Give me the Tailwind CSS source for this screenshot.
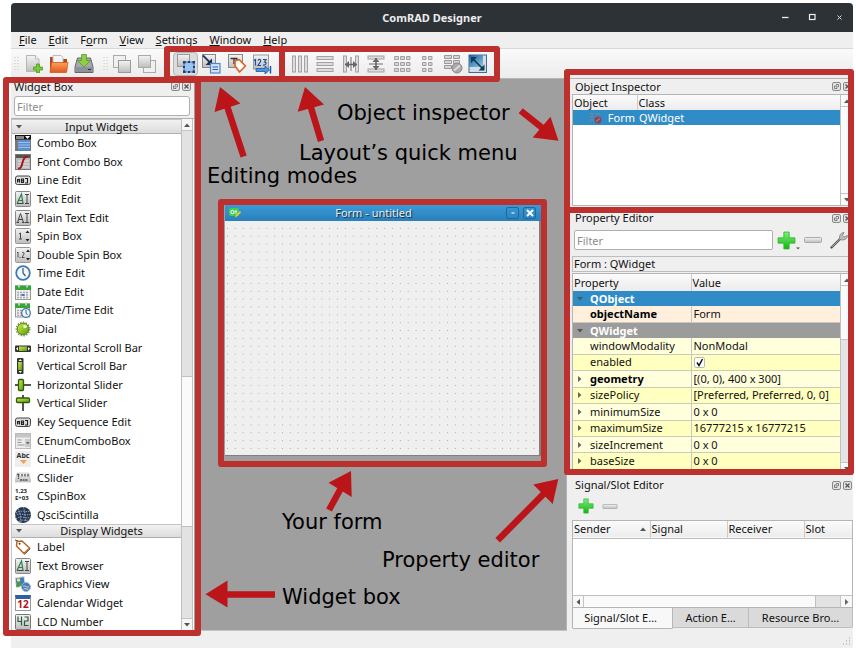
<!DOCTYPE html>
<html lang="en">
<head>
<meta charset="utf-8">
<title>ComRAD Designer</title>
<script src="https://cdn.jsdelivr.net/npm/@tailwindcss/browser@4"></script>
</head>
<body class="min-h-screen flex flex-col bg-white pt-[3px] pr-[3px] pb-1 pl-[11px] font-['Noto_Sans',sans-serif] text-[11px] leading-4 text-[#111]">

<!-- Shared icon symbols -->
<svg class="absolute size-0" aria-hidden="true">
  <defs>
    <linearGradient id="gGrey" x1="0" y1="0" x2="0" y2="1"><stop offset="0" stop-color="#f4f4f4"/><stop offset="1" stop-color="#bdbdbd"/></linearGradient>
    <linearGradient id="gGreen" x1="0" y1="0" x2="0" y2="1"><stop offset="0" stop-color="#7df07a"/><stop offset="1" stop-color="#12b312"/></linearGradient>
    <linearGradient id="gLime" x1="0" y1="0" x2="1" y2="1"><stop offset="0" stop-color="#c8f04a"/><stop offset="1" stop-color="#5a9a10"/></linearGradient>
    <linearGradient id="gOrange" x1="0" y1="0" x2="0" y2="1"><stop offset="0" stop-color="#f9a45c"/><stop offset="1" stop-color="#e0561d"/></linearGradient>
    <linearGradient id="gBlue" x1="0" y1="0" x2="1" y2="1"><stop offset="0" stop-color="#1d5f9e"/><stop offset="1" stop-color="#8cc4ea"/></linearGradient>
  </defs>
  <symbol id="float" viewBox="0 0 9 9"><rect x=".5" y=".5" width="8" height="8" rx="1.500" fill="#e4e4e4" stroke="#888"/><path d="M4 2.500h2.500v2.500M2.500 4h2.500v2.500h-2.500z" fill="none" stroke="#666" stroke-width=".8"/></symbol>
  <symbol id="close" viewBox="0 0 9 9"><rect x=".5" y=".5" width="8" height="8" rx="1.500" fill="#e4e4e4" stroke="#888"/><path d="M2.500 2.500l4 4m0-4l-4 4" stroke="#555" stroke-width="1.300"/></symbol>
  <symbol id="plus" viewBox="0 0 18 18"><path d="M6.500 1h5v5.500h5.500v5h-5.500v5.500h-5v-5.500h-5.500v-5h5.500z" fill="url(#gGreen)" stroke="#2fb52f" stroke-width=".8"/></symbol>
  <symbol id="minus" viewBox="0 0 18 6"><rect x=".5" y=".5" width="17" height="5" rx="1" fill="url(#gGrey)" stroke="#aaa"/></symbol>
  <symbol id="up" viewBox="0 0 6 4"><path d="M0 4l3-3.500 3 3.500z" fill="#555"/></symbol>
  <symbol id="down" viewBox="0 0 6 4"><path d="M0 0h6l-3 3.500z" fill="#555"/></symbol>
  <symbol id="right" viewBox="0 0 4 6"><path d="M0 0l3.500 3-3.500 3z" fill="#666"/></symbol>
  <symbol id="left" viewBox="0 0 4 6"><path d="M4 0l-3.500 3 3.500 3z" fill="#555"/></symbol>

  <symbol id="w-combo" viewBox="0 0 16 16"><rect width="16" height="16" fill="#777"/><rect width="16" height="4.500" fill="#111"/><path d="M10 1h5l-2.500 3z" fill="#fff"/><rect x="1" y="1" width="8" height="3" fill="#888"/><rect x="3" y="5" width="12" height="10.500" fill="#5d8fd0"/><path d="M3 7.500h12M3 10h12M3 12.500h12" stroke="#9dbfe8"/></symbol>
  <symbol id="w-font" viewBox="0 0 16 16"><rect x=".5" y=".5" width="15" height="15" fill="#b9b9b9" stroke="#777"/><rect x="1" y="1" width="14" height="3" fill="#555"/><path d="M3 7h11M3 10h11M3 13h11" stroke="#e6e6e6"/><path d="M3 14.500c3 .5 3.500-2 4.500-6s2-6.500 5.500-6" fill="none" stroke="#b3121a" stroke-width="2"/></symbol>
  <symbol id="w-line" viewBox="0 0 16 16"><rect x=".5" y="4" width="15" height="8.500" rx="2" fill="#ddd" stroke="#444"/><path d="M2.500 10.500V7.500h2v3M2.500 9h2M6.500 7v3.500h2v-3.500zM6.500 8.800h2M10 6.500h2.500v4.500h-2.500" fill="none" stroke="#222" stroke-width="1.100"/></symbol>
  <symbol id="w-text" viewBox="0 0 16 16"><rect x=".5" y=".5" width="15" height="15" rx="1" fill="url(#gGrey)" stroke="#888"/><path d="M2 12.500L6.500 3l1.500 9.500M3.500 9.500h4" fill="none" stroke="#2e8048" stroke-width="1.200"/><path d="M2 12.500h6.500M10 3.500h4M10 12.500h4M12 3.500v9" stroke="#444" fill="none"/></symbol>
  <symbol id="w-plain" viewBox="0 0 16 16"><rect x=".5" y=".5" width="15" height="15" rx="1" fill="url(#gGrey)" stroke="#888"/><path d="M2.500 12.500L5.500 3.500l3 9M3.500 9.500h4M1.500 12.500h2.500M7 12.500h2.500M10 3.500h4M10 12.500h4M12 3.500v9" fill="none" stroke="#444"/></symbol>
  <symbol id="w-spin" viewBox="0 0 16 16"><rect x=".5" y=".5" width="15" height="15" rx="1" fill="url(#gGrey)" stroke="#999"/><path d="M4 6l1.500-1v6M4 11h3" fill="none" stroke="#444"/><path d="M10.500 5l2-2.500 2 2.500zM10.500 11l2 2.500 2-2.500z" fill="#222"/></symbol>
  <symbol id="w-dspin" viewBox="0 0 16 16"><rect x=".5" y=".5" width="15" height="15" rx="1" fill="url(#gGrey)" stroke="#999"/><path d="M2 6l1-1v5.500M5 10v1M7 6c1-1.500 2.500-.5 2 1l-2 3.500h2.500" fill="none" stroke="#444" stroke-width=".9"/><path d="M11 5l2-2.500 2 2.500zM11 11l2 2.500 2-2.500z" fill="#222"/></symbol>
  <symbol id="w-time" viewBox="0 0 16 16"><circle cx="8" cy="8" r="6.800" fill="#f4f8fc" stroke="#3f78b5" stroke-width="1.800"/><path d="M8 3v5l2.500 3" fill="none" stroke="#33577d" stroke-width="1.200"/></symbol>
  <symbol id="w-date" viewBox="0 0 16 16"><rect x=".5" y="2" width="15" height="13.500" fill="#eee" stroke="#999"/><rect x="0" y="1.500" width="16" height="4.500" fill="#37a53b"/><path d="M4 0v3.500M12 0v3.500" stroke="#ddd" stroke-width="1.500"/><path d="M2 8.500h12M2 11h12M2 13.500h12" stroke="#aaa" stroke-dasharray="2 1" stroke-width="1.300"/><path d="M6.500 11h3" stroke="#3c7fd0" stroke-width="2"/></symbol>
  <symbol id="w-dt" viewBox="0 0 16 16"><rect x=".5" y="2" width="14" height="13" fill="#eee" stroke="#999"/><rect x="0" y="1.500" width="15" height="4.500" fill="#37a53b"/><path d="M4 0v3.500M11 0v3.500" stroke="#ddd" stroke-width="1.500"/><path d="M2 8.500h12M2 11h12M2 13.500h12" stroke="#aaa" stroke-dasharray="2 1" stroke-width="1.300"/><circle cx="11" cy="11" r="4.300" fill="#f4f8fc" stroke="#3f78b5" stroke-width="1.300"/><path d="M11 8v3l1.500 2" fill="none" stroke="#33577d"/></symbol>
  <symbol id="w-dial" viewBox="0 0 16 16"><circle cx="8" cy="8" r="6.500" fill="none" stroke="#8a9a6a" stroke-width="2" stroke-dasharray="1.500 1.200"/><circle cx="8" cy="8" r="5.800" fill="url(#gLime)" stroke="#5b8a1a"/><circle cx="10" cy="5.500" r="1.800" fill="#eaffb0"/></symbol>
  <symbol id="w-hscroll" viewBox="0 0 16 16"><rect x="0" y="5.500" width="16" height="6.500" rx="1" fill="#333"/><rect x="4" y="6.500" width="8" height="4.500" fill="url(#gLime)"/><path d="M3 7v3.500l-2-1.700zM13 7v3.500l2-1.700z" fill="#fff"/></symbol>
  <symbol id="w-vscroll" viewBox="0 0 16 16"><rect x="2" y="0" width="6.500" height="16" rx="1" fill="#333"/><rect x="3.200" y="4" width="4" height="8" fill="url(#gLime)"/><path d="M3.500 3h3.500l-1.700-2zM3.500 13h3.500l-1.700 2z" fill="#fff"/></symbol>
  <symbol id="w-hslider" viewBox="0 0 16 16"><path d="M0 8h16" stroke="#555" stroke-width="2"/><rect x="3.500" y="2.500" width="5" height="11" rx="1" fill="url(#gLime)" stroke="#345a10" stroke-width="1.300"/></symbol>
  <symbol id="w-vslider" viewBox="0 0 16 16"><path d="M8 0v16" stroke="#555" stroke-width="2"/><rect x="1.500" y="3" width="13" height="4.500" rx="1" fill="url(#gLime)" stroke="#345a10" stroke-width="1.300"/></symbol>
  <symbol id="w-enum" viewBox="0 0 16 16"><rect x=".5" y=".5" width="15" height="15" fill="#ececec" stroke="#bbb"/><rect x="1" y="1" width="14" height="3.500" fill="#c5c5c5"/><path d="M2.500 7h4M2.500 9.500h4M2.500 12h7" stroke="#999"/><rect x="10" y="6" width="5" height="8" fill="#ccc"/><path d="M11 9h3.500l-1.700 2.500z" fill="#666"/></symbol>
  <symbol id="w-cslider" viewBox="0 0 16 16"><path d="M2 3h12l2 9H0z" fill="url(#gGrey)" stroke="#bbb" stroke-width=".6"/><path d="M2 4.500h3M3.500 5v4M7 4v3M10 4v3M13 4v3M5 10h8" stroke="#555" stroke-width="1.300" stroke-dasharray="2 .6"/></symbol>
  <symbol id="w-qsci" viewBox="0 0 16 16"><circle cx="8" cy="8" r="8" fill="#26364f"/><path d="M1 6c5-4 10 0 14-2M0 9c5-5 10 1 16-2M1 12c5-5 9 1 14-2M4 14.500c3-3 6 0 9-1.500M3 2c3 4 2 8 3 13M8 0c3 5 1 10 3 15" fill="none" stroke="#9db6d4" stroke-width=".9" stroke-dasharray="1.500 1"/></symbol>
  <symbol id="w-label" viewBox="0 0 16 16"><path d="M0 1l3 1 1 3" stroke="#444" fill="none"/><path d="M1.500 7L2 2.500 7 2l7.500 7-5.500 5.500z" fill="#fff" stroke="#b8641f" stroke-width="1.500" stroke-linejoin="round"/><path d="M9.500 15.500l6-6" stroke="#666" stroke-width="1"/><circle cx="4.500" cy="4.800" r="1" fill="#444"/></symbol>
  <symbol id="w-graph" viewBox="0 0 16 16"><path d="M0 2l9-1.500 1.500 9-9 2z" fill="#3b7cc4" stroke="#ddd"/><circle cx="3.500" cy="4" r="1.800" fill="#f4e25e"/><path d="M1 9l3-3 6 3-8.500 2z" fill="#4b9b3b"/><circle cx="11" cy="11" r="4.500" fill="#4a79ad" stroke="#9dbbdc"/><path d="M8 10.500c2-2 4 2 6 0M8.500 13c2-1.500 3 1 5 0" stroke="#cfe2f5" fill="none"/></symbol>
  <symbol id="w-lcd" viewBox="0 0 16 16"><rect x=".5" y=".5" width="15" height="15" rx="1" fill="url(#gGrey)" stroke="#777"/><path d="M3 2.500v5h3.500M6.500 2.500v9M9.500 3h3.500v4h-3.500v4.500h4" fill="none" stroke="#2d5b3a" stroke-width="1.200"/></symbol>
</svg>

<div class="flex-1 flex flex-col bg-[#efefef]">
  <!-- Title bar -->
  <header class="h-[29px] shrink-0 grid grid-cols-[1fr_auto_1fr] items-center rounded-t-[4px] bg-[#2d3236] text-white">
    <span></span>
    <h1 class="font-bold text-[11px] text-[#ececec]">ComRAD Designer</h1>
    <div class="flex justify-end gap-4 pr-2">
      <button aria-label="Minimize" class="size-[11px]"><svg viewBox="0 0 11 11"><path d="M2 5.500h6.500" stroke="#eee" stroke-width="1.300"/></svg></button>
      <button aria-label="Maximize" class="size-[11px]"><svg viewBox="0 0 11 11"><rect x="2.500" y="2.500" width="5.500" height="5" fill="none" stroke="#eee" stroke-width="1.200"/></svg></button>
      <button aria-label="Close window" class="size-[11px]"><svg viewBox="0 0 11 11"><path d="M3.500 3.500l4 4m0-4l-4 4" stroke="#ddd"/></svg></button>
    </div>
  </header>

  <!-- Menu bar -->
  <nav class="h-4 shrink-0 flex items-center gap-3 pl-2">
    <button><u>F</u>ile</button>
    <button><u>E</u>dit</button>
    <button>F<u>o</u>rm</button>
    <button><u>V</u>iew</button>
    <button><u>S</u>ettings</button>
    <button><u>W</u>indow</button>
    <button><u>H</u>elp</button>
  </nav>

  <!-- Tool bar -->
  <div class="h-[31px] shrink-0 flex items-center border-y border-t-[#d8d8d8] border-b-[#b5b5b5] bg-linear-to-b from-[#fafafa] to-[#ececec]">
    <div class="flex items-center w-[87px] pl-[3px]">
      <svg class="w-[5px] h-4 mr-[2px]" viewBox="0 0 5 16"><path d="M1 1v14M4 1v14" stroke="#c4c4c4" stroke-dasharray="1 2"/></svg>
      <button aria-label="New" class="w-[25px] grid place-items-center"><svg class="size-[18px]" viewBox="0 0 18 18"><path d="M1.500 .5h9l3.500 3.500v12.500h-12.500z" fill="url(#gGrey)" stroke="#b5b5b5"/><path d="M10.500 .5v3.500h3.500" fill="#fff" stroke="#bbb"/><path d="M11.500 9h3v3h3v3h-3v3h-3v-3h-3v-3h3z" fill="#7cc63c" stroke="#4f9a1e" stroke-width=".8"/></svg></button>
      <button aria-label="Open" class="w-[25px] grid place-items-center"><svg class="size-5" viewBox="0 0 20 20"><path d="M1 3h5l1 2h11v12H1z" fill="#b5441a"/><path d="M4 1.500h8l2 2v5H4z" fill="#f5f5f5" stroke="#bbb"/><path d="M2.500 8.500h16.500l-1.500 10H1z" fill="url(#gOrange)" stroke="#cf5a20" stroke-width=".8"/></svg></button>
      <button aria-label="Save" class="w-[25px] grid place-items-center"><svg class="size-5" viewBox="0 0 20 20"><path d="M3.500 4h13l2.500 9v5.500H1V13z" fill="#a4a9ad" stroke="#666"/><path d="M1.500 13h17v5h-17z" fill="#8d9296"/><path d="M14 15.500h3" stroke="#333"/><path d="M7.500 .5h5v6h4l-6.500 6.500-6.500-6.500h4z" fill="#8fcf45" stroke="#5a9a22" stroke-width=".8"/></svg></button>
    </div>
    <div class="flex items-center w-[76px] pl-[5px]">
      <svg class="w-[5px] h-4 mr-[1px]" viewBox="0 0 5 16"><path d="M1 1v14M4 1v14" stroke="#c4c4c4" stroke-dasharray="1 2"/></svg>
      <button aria-label="Bring to front" class="w-[25px] grid place-items-center"><svg class="size-5" viewBox="0 0 20 20"><rect x="1.500" y="1.500" width="12" height="12" fill="#f0f0f0" stroke="#aaa"/><rect x="6.500" y="6.500" width="12" height="12" fill="url(#gGrey)" stroke="#999"/></svg></button>
      <button aria-label="Send to back" class="w-[25px] grid place-items-center"><svg class="size-5" viewBox="0 0 20 20"><rect x="6.500" y="6.500" width="12" height="12" fill="#f0f0f0" stroke="#aaa"/><rect x="1.500" y="1.500" width="12" height="12" fill="url(#gGrey)" stroke="#aaa"/></svg></button>
    </div>
    <!-- Editing modes -->
    <div class="relative flex items-center justify-between w-[102px] -ml-px mr-px">
      <button aria-label="Edit widgets" aria-pressed="true" class="w-[25px] h-6 grid place-items-center rounded-sm border border-[#b5b5b5] bg-[#dcdcdc]"><svg class="size-5" viewBox="0 0 20 20"><rect x="1.500" y=".5" width="12" height="12" fill="url(#gGrey)" stroke="#999"/><rect x="8" y="8" width="10" height="10" fill="#9cc4f0" stroke="#3d6fb0"/><path d="M7 7h2.500v2.500H7zM16.500 7H19v2.500h-2.500zM7 16.500h2.500V19H7zM16.500 16.500H19V19h-2.500zM12 7h2v2h-2zM12 17h2v2h-2zM7 12h2v2H7zM17 12h2v2h-2z" fill="#1c3f73"/></svg></button>
      <button aria-label="Edit signals and slots" class="w-[25px] grid place-items-center"><svg class="size-5" viewBox="0 0 20 20"><rect x="1.500" y=".5" width="13" height="13" fill="url(#gGrey)" stroke="#888"/><path d="M2 1.500l7 7" stroke="#223a5a" stroke-width="1.800"/><path d="M11 4.500v6.500H4.500z" fill="#16304f"/><rect x="9.500" y="9.500" width="9.500" height="9.500" fill="#cfe2f8" stroke="#5486c4" stroke-width="1.200"/><path d="M11.500 13h5.500M11.500 15.500h5.500" stroke="#2f62a6"/></svg></button>
      <button aria-label="Edit buddies" class="w-[25px] grid place-items-center"><svg class="size-5" viewBox="0 0 20 20"><rect x="1.500" y=".5" width="14" height="13" fill="url(#gGrey)" stroke="#888"/><path d="M3.500 4.500h7M7 4v6M7 4l4 2" stroke="#333" stroke-width="1.300" fill="none"/><path d="M8 12V7l4-1.500 6.500 6.500-6 6z" fill="#fff" stroke="#dd6420" stroke-width="1.700" stroke-linejoin="round"/></svg></button>
      <button aria-label="Edit tab order" class="w-[25px] grid place-items-center"><svg class="size-5" viewBox="0 0 20 20"><rect x="1.500" y="1" width="15" height="14" fill="url(#gGrey)" stroke="#999"/><path d="M2 6.500l1.500-1v6M6 6.500c1-2 3.500-1 2.500 1l-2.500 4h3M11 5.500h3l-1.500 2.500c2.500 0 2 3.500-1.500 3" fill="none" stroke="#1b4f94" stroke-width="1.200"/><path d="M4 14.500h9v-2.500l4.500 4-4.500 4v-2.500H4z" fill="#4e94dc" stroke="#1d5aa3" stroke-width=".8"/><path d="M18.500 12v7.500" stroke="#1d5aa3" stroke-width="1.500"/></svg></button>
      <span class="absolute z-20 -left-[9px] -right-[10px] -top-[6px] -bottom-[6px] border-[6px] border-[#bc302d] rounded-[3px] pointer-events-none"></span>
    </div>
    <!-- Layout's quick menu -->
    <div class="relative flex items-center justify-between w-[204px] h-6 ml-[11px]">
      <button aria-label="Lay out horizontally" class="w-[25px] grid place-items-center"><svg class="size-[18px]" viewBox="0 0 18 18" fill="#dcdcdc" stroke="#a3a3a3"><rect x="1.500" y="1" width="3" height="16"/><rect x="7.500" y="1" width="3" height="16"/><rect x="13.500" y="1" width="3" height="16"/></svg></button>
      <button aria-label="Lay out vertically" class="w-[25px] grid place-items-center"><svg class="size-[18px]" viewBox="0 0 18 18" fill="#dcdcdc" stroke="#a3a3a3"><rect x="1" y="1.500" width="16" height="3"/><rect x="1" y="7.500" width="16" height="3"/><rect x="1" y="13.500" width="16" height="3"/></svg></button>
      <button aria-label="Horizontal splitter" class="w-[25px] grid place-items-center"><svg class="size-[18px]" viewBox="0 0 18 18"><g fill="#dcdcdc" stroke="#a3a3a3"><rect x="1.500" y="1" width="3" height="16"/><rect x="13.500" y="1" width="3" height="16"/></g><path d="M9 2v14" stroke="#999" stroke-width="1.500"/><path d="M3 9.500h12" stroke="#666" stroke-width="1.600"/><path d="M7 6v7L3 9.500zM11 6v7L15 9.500z" fill="#666"/></svg></button>
      <button aria-label="Vertical splitter" class="w-[25px] grid place-items-center"><svg class="size-[18px]" viewBox="0 0 18 18"><g fill="#dcdcdc" stroke="#a3a3a3"><rect x="1" y="1" width="16" height="3"/><rect x="1" y="14" width="16" height="3"/></g><path d="M2 9h14" stroke="#999" stroke-width="1.500"/><path d="M9 3v12" stroke="#666" stroke-width="1.600"/><path d="M5.500 7h7L9 3zM5.500 11h7L9 15z" fill="#666"/></svg></button>
      <button aria-label="Lay out in a grid" class="w-[25px] grid place-items-center"><svg class="size-[18px]" viewBox="0 0 18 18" fill="#d6d6d6" stroke="#a0a0a0"><path d="M1.500 1.500h4v3h-4zM7.500 1.500h4v3h-4zM13.500 1.500h3.500v3h-3.500zM1.500 7.500h4v3h-4zM7.500 7.500h4v3h-4zM13.500 7.500h3.500v3h-3.500zM1.500 13.500h4v3h-4zM7.500 13.500h4v3h-4zM13.500 13.500h3.500v3h-3.500z"/></svg></button>
      <button aria-label="Lay out in a form" class="w-[25px] grid place-items-center"><svg class="size-[18px]" viewBox="0 0 18 18" fill="#d6d6d6" stroke="#a0a0a0"><path d="M4.500 1.500h3.500v3h-3.500zM10.500 1.500h3.500v3h-3.500zM4.500 7.500h3.500v3h-3.500zM10.500 7.500h3.500v3h-3.500zM4.500 13.500h3.500v3h-3.500zM10.500 13.500h3.500v3h-3.500z"/></svg></button>
      <button aria-label="Break layout" class="w-[25px] grid place-items-center"><svg class="size-5" viewBox="0 0 20 20"><path d="M1.500 1.500h7v3h-7zM10.500 1.500h6v3h-6zM1.500 6.500h7v3h-7zM10.500 6.500h6v3h-6zM1.500 11.500h7v3h-7z" fill="#d6d6d6" stroke="#999"/><circle cx="14" cy="14" r="5" fill="#aaa" stroke="#888"/><path d="M11 16.500l6-5" stroke="#ddd" stroke-width="1.800"/></svg></button>
      <button aria-label="Adjust size" class="w-[25px] grid place-items-center"><svg class="size-5" viewBox="0 0 20 20"><rect x="1" y="1" width="17.500" height="17.500" fill="#d5dde4" stroke="#3c6d9c"/><rect x="1" y="1" width="14" height="12" fill="url(#gBlue)"/><path d="M5 5l9.500 9.500" stroke="#0b3c50" stroke-width="1.600"/><path d="M3 3h6L3 9zM16.500 16.500v-6l-6 6z" fill="#0b3c50"/></svg></button>
      <span class="absolute z-20 -left-2 -right-[9px] -top-[6px] -bottom-[6px] border-[6px] border-[#bc302d] rounded-[3px] pointer-events-none"></span>
    </div>
  </div>

  <main class="flex-1 flex">
    <!-- Widget box dock -->
    <aside class="relative w-[183px] shrink-0 flex flex-col">
      <div class="h-[17px] flex items-center pl-[3px] pr-[3px] pb-[2px]">
        <h2 class="flex-1">Widget Box</h2>
        <button aria-label="Float widget box"><svg class="size-[9px] mr-[2px]"><use href="#float"/></svg></button>
        <button aria-label="Close widget box"><svg class="size-[9px]"><use href="#close"/></svg></button>
      </div>
      <input aria-label="Filter widgets" placeholder="Filter" class="ml-[3px] mr-1 mb-[2px] h-5 rounded-[3px] border border-[#b0b0b0] bg-white px-[2px] placeholder:text-[#8c8c8c]">
      <div class="h-[512px] flex border-t border-[#b0b0b0] bg-white">
        <div id="widgets" class="flex-1 overflow-hidden border-l border-[#c5c5c5]"></div>
        <div class="w-3 mr-px flex flex-col border-x border-[#c0c0c0] bg-[#e2e2e2]">
          <button aria-label="Scroll up" class="h-3 grid place-items-center bg-[#f6f6f6] border-b border-[#c5c5c5]"><svg class="w-[6px] h-1"><use href="#up"/></svg></button>
          <div class="h-[245px]"></div>
          <div class="h-[151px] border-y border-[#c0c0c0] bg-[#fafafa]"></div>
          <div class="flex-1"></div>
          <button aria-label="Scroll down" class="h-3 grid place-items-center bg-[#f6f6f6] border-t border-[#c5c5c5]"><svg class="w-[6px] h-1"><use href="#down"/></svg></button>
        </div>
      </div>
      <span class="absolute z-10 -left-2 -right-[7px] -top-[2px] -bottom-[5px] border-[6px] border-[#bc302d] rounded-[3px] pointer-events-none"></span>
    </aside>

    <!-- Design canvas -->
    <section class="relative flex-1 bg-[#9f9f9f] border-b border-[#c4c4c4] font-['DejaVu_Sans',sans-serif] text-[21px] leading-6 text-black whitespace-nowrap">
      <div class="absolute left-6 top-[120px] w-[329px] h-[268px] border-[6px] border-[#bc302d] rounded-[3px] flex flex-col pb-[5px] pl-px bg-[#9f9f9f] font-['Noto_Sans',sans-serif] text-[11px] leading-4">
        <div class="h-4 shrink-0 flex items-center px-1 gap-1 text-white bg-linear-to-b from-[#3a9ad8] to-[#2a80b9]">
          <svg class="w-3 h-[10px]" viewBox="0 0 12 10"><rect width="10" height="8" rx="2" fill="#41cd52"/><circle cx="3.500" cy="4" r="1.700" fill="none" stroke="#fff"/><path d="M7 2v4M6 3.500h2" stroke="#fff" stroke-width=".8"/><path d="M6 9.500l1-2.500 4-4 1 1.500-4 4z" fill="#f3c63c"/></svg>
          <span class="flex-1 text-center text-[#e8eef2] [text-shadow:1px_1px_1px_#123]">Form - untitled</span>
          <button aria-label="Minimize form" class="w-[13px] h-3 rounded-[2px] border border-[#1f6899] grid place-items-center"><svg class="w-2 h-2" viewBox="0 0 8 8"><path d="M2.500 4h3" stroke="#fff"/></svg></button>
          <button aria-label="Close form" class="w-[13px] h-3 mr-px rounded-[2px] border border-[#1f6899] grid place-items-center"><svg class="w-2 h-2" viewBox="0 0 8 8"><path d="M1 1l6 6m0-6L1 7" stroke="#fff" stroke-width="2"/></svg></button>
        </div>
        <svg class="flex-1 w-full min-h-0 bg-[#efefef] border-r-2 border-b border-[#808080]"><defs><pattern id="dots" width="7.860" height="7.860" patternUnits="userSpaceOnUse"><rect x="2" y="7" width=".8" height=".8" fill="#888"/></pattern></defs><rect width="100%" height="100%" fill="url(#dots)"/></svg>
      </div>
      <p class="absolute left-[143px] top-[22px]">Object inspector</p>
      <p class="absolute left-[105px] top-[62px]">Layout’s quick menu</p>
      <p class="absolute left-[13px] top-[85px]">Editing modes</p>
      <p class="absolute left-[88px] top-[431px]">Your form</p>
      <p class="absolute left-[188px] top-[469px]">Property editor</p>
      <p class="absolute left-[88px] top-[506px]">Widget box</p>
      <svg class="absolute inset-0 w-full h-full overflow-visible pointer-events-none" aria-hidden="true">
        <g transform="translate(-194 -79)" fill="#bb1419" stroke="#bb1419">
          <path stroke="none" d="M220 87L240.500 103.500 214.500 112zM305 87L324 104.500 297.700 111.700zM558.500 140.700L550.500 116.700 532.700 137.400zM351 471L328.500 482.700 351.700 497zM558.300 479L533.300 484.500 552.700 504zM205.500 594.300L227.500 580.500V607.500z"/>
          <path fill="none" stroke-width="6.500" d="M227 106L243.600 156.500M310.500 106L321 141M520.700 110.700L543 128.500M340.500 489L329 510M544 493.500L497.700 540.300M226 594.500H275"/>
        </g>
      </svg>
    </section>

    <!-- Right docks -->
    <aside class="w-[287px] shrink-0 flex flex-col">
      <section class="relative h-[128px] pl-[6px] flex flex-col">
        <div class="h-[15px] flex items-center pl-[3px]">
          <h2 class="flex-1">Object Inspector</h2>
          <button aria-label="Float object inspector"><svg class="size-[9px] mr-[2px]"><use href="#float"/></svg></button>
          <button aria-label="Close object inspector"><svg class="size-[9px] mr-[1px]"><use href="#close"/></svg></button>
        </div>
        <div class="flex h-[112px] border border-[#b5b5b5] bg-white">
          <div class="flex-1">
            <table class="w-full border-collapse text-left">
              <thead><tr class="h-[15px] leading-[14px] bg-linear-to-b from-[#fbfbfb] to-[#ececec]"><th class="w-16 pl-px font-normal border-r border-[#ccc]">Object</th><th class="pl-px font-normal">Class</th></tr></thead>
              <tbody><tr class="h-[15px] leading-[15px] bg-[#308cc6] text-white"><td class="pl-[17px] pr-[2px]"><span class="flex items-center justify-between"><svg class="w-3 h-3" viewBox="0 0 12 12"><path d="M0 2h4M6 2h4M0 5h4M6 5h4M0 8h4" stroke="#71879b" stroke-width="1.500"/><circle cx="8" cy="8" r="3.500" fill="#8d4257"/><path d="M6 9.500l4-3" stroke="#c08a98"/></svg><span>Form</span></span></td><td class="pl-[2px]">QWidget</td></tr></tbody>
            </table>
          </div>
          <div class="w-3 flex flex-col justify-between border-l border-[#c0c0c0] bg-[#fafafa]">
            <button aria-label="Scroll inspector up" class="h-3 grid place-items-center border-b border-[#c5c5c5]"><svg class="w-[6px] h-1"><use href="#up"/></svg></button>
            <button aria-label="Scroll inspector down" class="h-3 grid place-items-center border-t border-[#c5c5c5]"><svg class="w-[6px] h-1"><use href="#down"/></svg></button>
          </div>
        </div>
        <span class="absolute z-10 -left-[2px] -right-px -top-[10px] -bottom-[6px] border-[6px] border-[#bc302d] rounded-[3px] pointer-events-none"></span>
      </section>

      <section class="relative h-[268px] pl-[6px] flex flex-col">
        <div class="h-[22px] flex items-center pl-[3px]">
          <h2 class="flex-1">Property Editor</h2>
          <button aria-label="Float property editor"><svg class="size-[9px] mr-[2px]"><use href="#float"/></svg></button>
          <button aria-label="Close property editor"><svg class="size-[9px] mr-[1px]"><use href="#close"/></svg></button>
        </div>
        <div class="h-[22px] flex items-center pl-[2px]">
          <input aria-label="Filter properties" placeholder="Filter" class="flex-1 min-w-0 h-5 border border-[#b0b0b0] rounded-[2px] bg-white px-[2px] placeholder:text-[#8c8c8c]">
          <button aria-label="Add property" class="ml-1 flex items-end"><svg class="size-[19px]"><use href="#plus"/></svg><svg class="w-1 h-[3px]" viewBox="0 0 6 4"><use href="#down"/></svg></button>
          <button aria-label="Remove property" class="ml-1"><svg class="w-[18px] h-[6px]"><use href="#minus"/></svg></button>
          <button aria-label="Configure" class="ml-2 mr-px flex items-end"><svg class="size-[18px]" viewBox="0 0 18 18"><path d="M1.500 16.500L11 7" stroke="#555" stroke-width="2.400" stroke-linecap="round"/><path d="M2 16L11 7" stroke="#aaa" stroke-width="1"/><path d="M10 8.500c-1.500-3 .5-7 4-7l-1.500 3 1.500 1.500 3.500-1.500c0 3.500-4 5.500-7.500 4z" fill="#bbb" stroke="#777" stroke-width=".7"/></svg><svg class="w-1 h-[3px]" viewBox="0 0 6 4"><use href="#down"/></svg></button>
        </div>
        <p class="mt-[5px] mb-px h-4 leading-[14px] border border-[#bdbdbd] pl-px">Form : QWidget</p>
        <div class="flex-1 flex border border-[#b5b5b5] bg-white">
          <table class="flex-1 h-[196px] border-collapse text-left table-fixed leading-[14px]">
            <thead><tr class="h-[17px] bg-linear-to-b from-[#fbfbfb] to-[#ececec]"><th class="w-[118px] pl-px font-normal border-r border-[#ccc]">Property</th><th class="pl-px font-normal">Value</th></tr></thead>
            <tbody id="props"></tbody>
          </table>
          <div class="w-3 flex flex-col justify-between border-l border-[#c0c0c0] bg-[#e4e4e4]">
            <div class="h-[66px] bg-[#fafafa] border-b border-[#c5c5c5]"><button aria-label="Scroll properties up" class="w-full h-3 grid place-items-center border-b border-[#c5c5c5]"><svg class="w-[6px] h-1"><use href="#up"/></svg></button></div>
            <button aria-label="Scroll properties down" class="h-3 grid place-items-center bg-[#fafafa] border-t border-[#c5c5c5]"><svg class="w-[6px] h-1"><use href="#down"/></svg></button>
          </div>
        </div>
        <span class="absolute z-10 -left-[2px] -right-px top-0 bottom-0 border-[6px] border-[#bc302d] rounded-[3px] pointer-events-none"></span>
      </section>

      <section class="flex-1 pl-[5px] border-l border-[#b5b5b5] flex flex-col">
        <div class="h-5 flex items-center pl-[3px]">
          <h2 class="flex-1">Signal/Slot Editor</h2>
          <button aria-label="Float signal editor"><svg class="size-[9px] mr-[2px]"><use href="#float"/></svg></button>
          <button aria-label="Close signal editor"><svg class="size-[9px] mr-[1px]"><use href="#close"/></svg></button>
        </div>
        <div class="h-[25px] flex items-center gap-2 pl-[6px] pb-[3px]">
          <button aria-label="Add connection"><svg class="size-4"><use href="#plus"/></svg></button>
          <button aria-label="Remove connection"><svg class="w-4 h-[5px]"><use href="#minus"/></svg></button>
        </div>
        <div class="flex-1 border border-[#b5b5b5] bg-white flex flex-col">
          <table class="w-full table-fixed border-collapse text-left">
            <thead><tr class="h-[17px] bg-linear-to-b from-[#fbfbfb] to-[#ececec] border-b border-[#bbb]">
              <th class="w-[77px] pl-px pr-1 font-normal border-r border-[#ccc]"><span class="flex items-center justify-between">Sender<svg class="w-[6px] h-1"><use href="#up"/></svg></span></th>
              <th class="w-[77px] pl-px font-normal border-r border-[#ccc]">Signal</th>
              <th class="w-[77px] pl-px font-normal border-r border-[#ccc]">Receiver</th>
              <th class="pl-px font-normal">Slot</th></tr></thead>
          </table>
          <div class="flex-1"></div>
          <div class="h-3 flex border-t border-[#c0c0c0] bg-[#e2e2e2]">
            <button aria-label="Scroll left" class="w-[11px] grid place-items-center bg-[#f8f8f8] border-r border-[#c5c5c5]"><svg class="w-1 h-[6px]"><use href="#left"/></svg></button>
            <div class="flex-1 bg-[#fafafa] border-r border-[#c0c0c0]"></div>
            <div class="w-6"></div>
            <button aria-label="Scroll right" class="w-3 grid place-items-center bg-[#f8f8f8] border-l border-[#c5c5c5]"><svg class="w-1 h-[6px]"><use href="#right"/></svg></button>
          </div>
        </div>
        <div role="tablist" class="h-[21px] mb-[2px] flex items-start">
          <button role="tab" aria-selected="true" class="w-[101px] h-[21px] pr-1 bg-[#f8f8f8] border border-t-0 border-[#b5b5b5] rounded-b-[2px]">Signal/Slot E…</button>
          <button role="tab" aria-selected="false" class="w-[76px] h-5 bg-[#dadada] border-r border-b border-[#bdbdbd]">Action E…</button>
          <button role="tab" aria-selected="false" class="flex-1 h-5 bg-[#dadada] border-r border-b border-[#bdbdbd] rounded-br-[2px]">Resource Bro…</button>
        </div>
      </section>
    </aside>
  </main>

  <footer class="h-[17px] shrink-0 flex justify-end items-end pr-[2px] pb-[2px]">
    <svg class="size-[9px]" viewBox="0 0 9 9"><path d="M7 1h1M4 4h1M7 4h1M1 7h1M4 7h1M7 7h1" stroke="#bbb" stroke-width="1.500"/></svg>
  </footer>
</div>

<script>
const svg = id => `<svg class="size-4"><use href="#${id}"/></svg>`;
const abc = `<span class="w-4 h-4 flex flex-col items-center font-bold text-[7px] leading-[9px] text-[#333] bg-[#eee]">Abc<svg class="w-[7px] h-1" viewBox="0 0 7 4"><path d="M0 0h7L3.500 4z" fill="#f7a145"/></svg></span>`;
const sci = `<span class="w-4 h-4 font-bold text-[6px] leading-[7px] text-[#222]">1,23<br>E+03</span>`;
const cal = `<span class="w-4 h-4 border border-[#999] border-t-4 border-t-[#2c62a5] bg-white text-center font-bold text-[10px] leading-[11px] text-[#b3121a]">12</span>`;
const groups = [
  ["Input Widgets", "h-[390px]", "h-[15px]", [
    [svg("w-combo"), "Combo Box"], [svg("w-font"), "Font Combo Box"], [svg("w-line"), "Line Edit"], [svg("w-text"), "Text Edit"],
    [svg("w-plain"), "Plain Text Edit"], [svg("w-spin"), "Spin Box"], [svg("w-dspin"), "Double Spin Box"], [svg("w-time"), "Time Edit"],
    [svg("w-date"), "Date Edit"], [svg("w-dt"), "Date/Time Edit"], [svg("w-dial"), "Dial"], [svg("w-hscroll"), "Horizontal Scroll Bar"],
    [svg("w-vscroll"), "Vertical Scroll Bar"], [svg("w-hslider"), "Horizontal Slider"], [svg("w-vslider"), "Vertical Slider"],
    [svg("w-line"), "Key Sequence Edit"], [svg("w-enum"), "CEnumComboBox"], [abc, "CLineEdit"], [svg("w-cslider"), "CSlider"],
    [sci, "CSpinBox"], [svg("w-qsci"), "QsciScintilla"]]],
  ["Display Widgets", "h-[93px]", "h-[14px]", [
    [svg("w-label"), "Label"], [svg("w-text"), "Text Browser"], [svg("w-graph"), "Graphics View"], [cal, "Calendar Widget"], [svg("w-lcd"), "LCD Number"]]]
];
document.getElementById("widgets").innerHTML = groups.map(([title, size, head, items]) => `
  <h3 class="${head} flex items-center pl-1 leading-[14px] border-y border-t-[#c5c5c5] border-b-[#b0b0b0] bg-linear-to-b from-[#f2f2f2] to-[#dcdcdc]"><svg class="w-[6px] h-1"><use href="#down"/></svg><span class="flex-1 text-center">${title}</span></h3>
  <ul class="${size} flex flex-col">${items.map(([icon, name]) => `<li class="flex-1 flex items-center gap-[6px] pl-[3px]">${icon}<span>${name}</span></li>`).join("")}</ul>`).join("");

const rows = [
  ["group", "QObject", "bg-[#308cc6]"],
  ["bold", "objectName", "bg-[#ffefdc]", "Form"],
  ["group", "QWidget", "bg-[#9c9c9c]"],
  ["", "windowModality", "bg-[#ffffdc]", "NonModal"],
  ["", "enabled", "bg-[#ffffbf]", null],
  ["bold open", "geometry", "bg-[#ffffdc]", "[(0, 0), 400 x 300]"],
  ["open", "sizePolicy", "bg-[#ffffbf]", "[Preferred, Preferred, 0, 0]"],
  ["open", "minimumSize", "bg-[#ffffdc]", "0 x 0"],
  ["open", "maximumSize", "bg-[#ffffbf]", "16777215 x 16777215"],
  ["open", "sizeIncrement", "bg-[#ffffdc]", "0 x 0"],
  ["open", "baseSize", "bg-[#ffffbf]", "0 x 0"]
];
const tick = `<label class="relative block size-[11px]"><input type="checkbox" checked aria-label="enabled" class="block appearance-none size-[11px] rounded-[2px] border border-[#bbb] bg-white"><svg class="absolute inset-0 size-[11px]" viewBox="0 0 11 11"><path d="M3 5.500l2 3 3.500-6.500" fill="none" stroke="#111" stroke-width="1.500"/></svg></label>`;
document.getElementById("props").innerHTML = rows.map(([kind, name, bg, value]) => {
  if (kind === "group") return `<tr class="${bg} text-white font-bold"><td colspan="2"><span class="flex items-center pl-1 gap-[7px]"><svg class="w-[6px] h-1"><use href="#down"/></svg>${name}</span></td></tr>`;
  const mark = kind.includes("open") ? `<svg class="w-1 h-[6px]"><use href="#right"/></svg>` : "";
  return `<tr class="${bg} border-b border-[#c9c9c0]"><td class="border-r border-[#c9c9c0]"><span class="flex items-center pl-[5px] ${kind.includes("bold") ? "font-bold text-black" : ""}"><span class="w-3">${mark}</span>${name}</span></td><td class="pl-[2px] whitespace-nowrap">${value === null ? tick : value}</td></tr>`;
}).join("");
</script>
</body>
</html>
